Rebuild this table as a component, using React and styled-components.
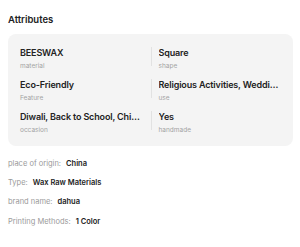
import React from "react";
import styled, { createGlobalStyle } from "styled-components";

const Global = createGlobalStyle`
  html, body { margin: 0; padding: 0; background: #fff; }
  body { font-family: Inter, "Noto Sans", sans-serif; color: #222; }
`;

const Page = styled.div`
  padding: 13px 7px 0 8px;
  width: 285px;
`;

const Title = styled.h3`
  margin: 0 0 8px 0;
  font-size: 9.5px;
  font-weight: 600;
  line-height: 13px;
  color: #222;
`;

const Card = styled.div`
  background: #f4f4f4;
  border-radius: 8px;
  padding: 12px 12px 4px 12px;
  display: grid;
  grid-template-columns: 1fr 1fr;
`;

const Cell = styled.div`
  height: 32px;
  box-sizing: border-box;
  padding-left: ${(p) => (p.$divided ? "8px" : "0")};
  padding-right: ${(p) => (p.$divided ? "1px" : "8px")};
  display: flex;
  flex-direction: column;
  position: relative;
  min-width: 0;
  ${(p) =>
    p.$divided &&
    `
    &::before {
      content: "";
      position: absolute;
      left: 0;
      top: 1px;
      height: 19px;
      width: 1px;
      background: #e2e2e2;
    }
  `}
`;

const Value = styled.div`
  font-size: 9px;
  font-weight: 600;
  line-height: 14px;
  letter-spacing: -0.15px;
  color: #222;
  white-space: nowrap;
  overflow: hidden;
  text-overflow: ellipsis;
`;

const Label = styled.div`
  font-size: 6.5px;
  line-height: 10px;
  margin-top: 1px;
  color: #a3a3a3;
`;

const Props = styled.div`
  margin-top: 11px;
  display: flex;
  flex-direction: column;
  gap: 5.2px;
`;

const Row = styled.div`
  font-size: 7.5px;
  line-height: 14px;
  display: flex;
  gap: 5px;
`;

const Key = styled.span`
  color: #9a9a9a;
`;

const Val = styled.span`
  color: #222;
  font-weight: 600;
`;

const attrs = [
  { value: "BEESWAX", label: "material" },
  { value: "Square", label: "shape" },
  { value: "Eco-Friendly", label: "Feature" },
  { value: "Religious Activities, Wedding, Party, Home Decoration", label: "use" },
  { value: "Diwali, Back to School, Chinese New Year, Christmas", label: "occasion" },
  { value: "Yes", label: "handmade" },
];

const details = [
  ["place of origin:", "China"],
  ["Type:", "Wax Raw Materials"],
  ["brand name:", "dahua"],
  ["Printing Methods:", "1 Color"],
];

export default function App() {
  return (
    <>
      <Global />
      <Page>
        <Title>Attributes</Title>
        <Card>
          {attrs.map((a, i) => (
            <Cell key={a.label} $divided={i % 2 === 1}>
              <Value>{a.value}</Value>
              <Label>{a.label}</Label>
            </Cell>
          ))}
        </Card>
        <Props>
          {details.map(([k, v]) => (
            <Row key={k}>
              <Key>{k}</Key>
              <Val>{v}</Val>
            </Row>
          ))}
        </Props>
      </Page>
    </>
  );
}
